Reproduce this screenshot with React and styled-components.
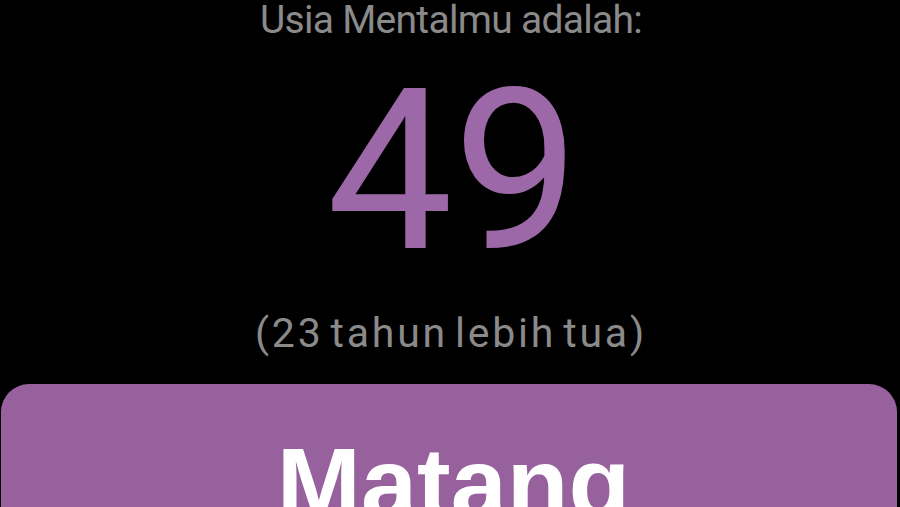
import React from "react";
import styled, { createGlobalStyle } from "styled-components";

const Global = createGlobalStyle`
  html, body { margin: 0; padding: 0; background: #000; }
  body { overflow: hidden; }
`;

const Screen = styled.div`
  width: 900px;
  height: 507px;
  background: #000;
  display: flex;
  flex-direction: column;
  align-items: center;
  overflow: hidden;
  box-sizing: border-box;
  padding: 0 3px 0 1px;
`;

const Caption = styled.div`
  font-family: Roboto, "Noto Sans", sans-serif;
  font-size: ${(p) => p.$size || 40}px;
  line-height: 40px;
  color: #8a8a8a;
  margin-top: ${(p) => p.$top || 0}px;
  letter-spacing: ${(p) => p.$spacing || 0}px;
  word-spacing: ${(p) => p.$words || 0}px;
  padding-left: ${(p) => p.$shift || 0}px;
  white-space: nowrap;
`;

const BigNumber = styled.div`
  font-family: Roboto, "Noto Sans", sans-serif;
  font-size: 225px;
  line-height: 1;
  font-weight: 400;
  color: #9c68a8;
  margin-top: 19px;
  padding-left: 8px;
  white-space: nowrap;
`;

const ResultCard = styled.div`
  align-self: stretch;
  margin-top: 31px;
  background: #97619d;
  border-radius: 28px 28px 0 0;
  padding-top: 49px;
  padding-left: 9px;
  height: 200px;
  display: flex;
  justify-content: center;
`;

const ResultTitle = styled.div`
  font-family: "Liberation Sans", Arial, sans-serif;
  font-weight: 700;
  font-size: 101px;
  line-height: 1;
  color: #fff;
  white-space: nowrap;
`;

export default function App() {
  return (
    <>
      <Global />
      <Screen>
        <Caption $size={39} $spacing={-0.7} $shift={4}>Usia Mentalmu adalah:</Caption>
        <BigNumber>49</BigNumber>
        <Caption $top={29} $size={41} $spacing={2.8} $words={-6} $shift={4}>
          (23 tahun lebih tua)
        </Caption>
        <ResultCard>
          <ResultTitle>Matang</ResultTitle>
        </ResultCard>
      </Screen>
    </>
  );
}
